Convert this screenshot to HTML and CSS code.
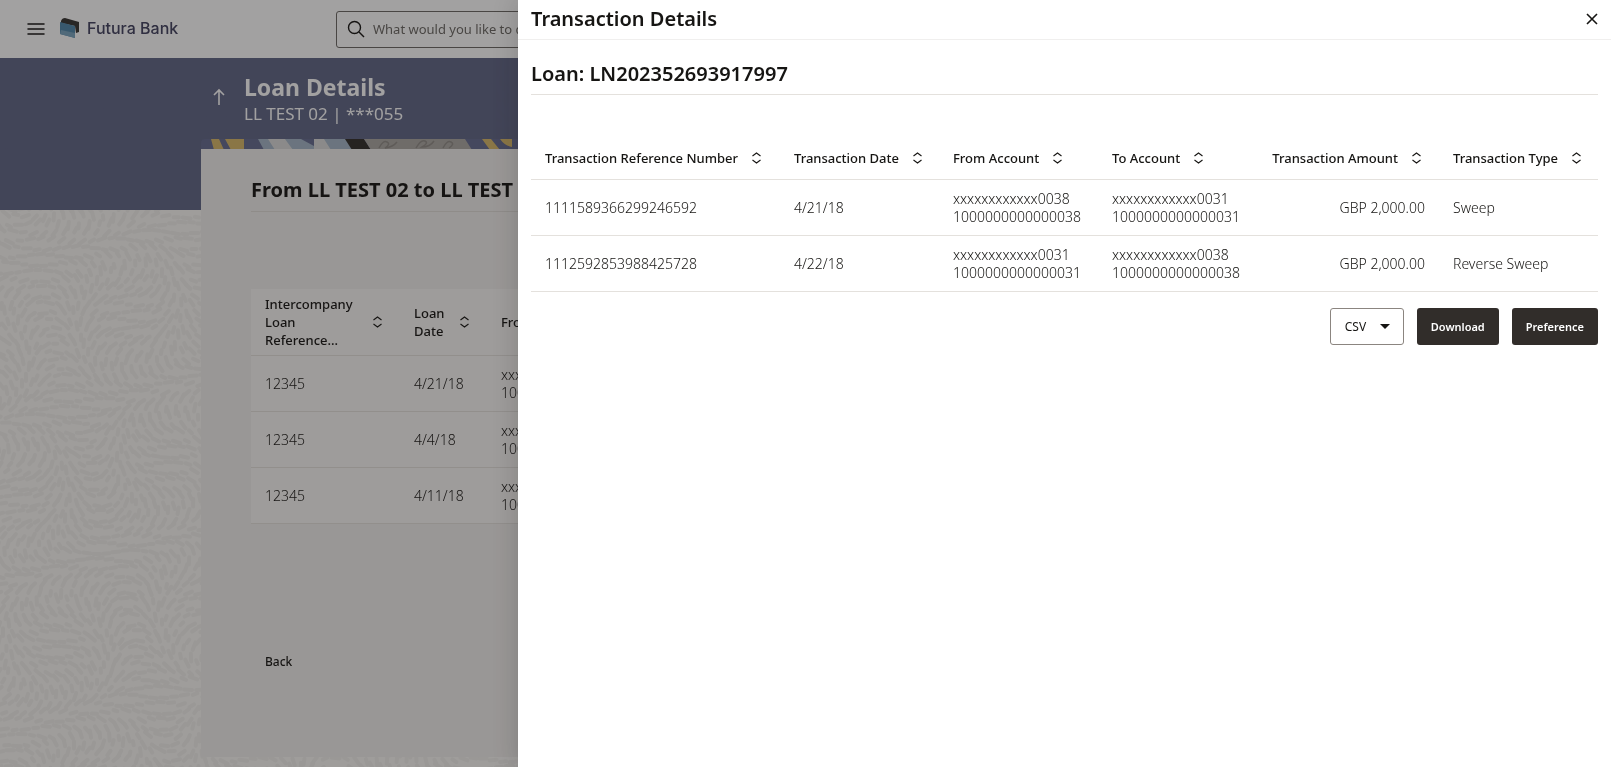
FILE: index.html
```
<!DOCTYPE html>
<html lang="en">
<head>
  <meta charset="UTF-8">
  <meta name="viewport" content="width=device-width, initial-scale=1.0">
  <title>Loan Details - Futura Bank</title>
  <link rel="stylesheet" href="styles.css">
</head>
<body>
  <!-- Sort icon shared by all table headers -->
  <svg class="sprite" aria-hidden="true">
    <symbol id="sort" viewBox="0 0 9 12">
      <path d="M0.5 4 L4.5 1 L8.5 4 M0.5 8 L4.5 11 L8.5 8" fill="none" stroke="currentColor" stroke-width="1.1"/>
    </symbol>
  </svg>

  <canvas class="texture"></canvas>

  <header class="topbar">
    <button class="icon-btn" type="button" aria-label="Menu">
      <svg width="18" height="14" viewBox="0 0 18 14"><path d="M1 2h16M1 7h16M1 12h16" stroke="#161513" stroke-width="1.5" stroke-linecap="round"/></svg>
    </button>
    <a class="brand" href="#">
      <svg width="20" height="20" viewBox="0 0 20 20">
        <path d="M1 3 Q2 0 5 0 L19 4 V14 L16 15 L15 8 L1 5z" fill="#35322f"/>
        <path d="M0 4 L15 8 V20 L0 16z" fill="#4f86a8"/>
        <path d="M1 12 L15 15 V20 L0 16z" fill="#79a3be"/>
      </svg>
      <span>Futura Bank</span>
    </a>
    <label class="search">
      <svg width="18" height="18" viewBox="0 0 18 18"><circle cx="7.5" cy="7.5" r="6" fill="none" stroke="#161513" stroke-width="1.4"/><path d="M12 12l5 5" stroke="#161513" stroke-width="1.4"/></svg>
      <input type="search" placeholder="What would you like to do today?" aria-label="Search">
    </label>
  </header>

  <main>
    <div class="banner">
      <a class="up" href="#" aria-label="Go back">
        <svg width="12" height="18" viewBox="0 0 12 18"><path d="M6 17V2M1 7l5-5 5 5" fill="none" stroke="#fff" stroke-width="1.6"/></svg>
      </a>
      <div>
        <h1>Loan Details</h1>
        <p>LL TEST 02 | ***055</p>
      </div>
    </div>

    <section class="card">
      <svg class="strip" viewBox="0 0 1209 10" preserveAspectRatio="xMinYMin slice">
        <rect width="1209" height="11" fill="#656b90"/>
        <path d="M10 0h8l5 11h-10z M24 0h19v11h-13z" fill="#d8b868"/>
        <path d="M57 0h90l10 11h-94z" fill="#a3b5c6"/>
        <path d="M67 0h17l8 11h-18z M113 0h10l7 11h-17z" fill="#d9d9d9"/>
        <path d="M100 0h13v7z" fill="#656b90"/>
        <path d="M144 0h19l7 11h-19z" fill="#312d2a"/>
        <path d="M163 0h101l7 11h-101z" fill="#aaa7a2"/>
        <path d="M178 9q4-8 8-6t-2 6q8-1 12-6M215 9q5-9 9-7t-3 6q8 0 12-6M242 9q4-8 8-6t-2 6" fill="none" stroke="#8f8b86" stroke-width="1.5"/>
        <path d="M281 0h9l9 11h-10z M299 0h12v8q-7-1-12-8z" fill="#d8b868"/>
        <path d="M330 0h40l10 11h-40z M520 0h60l10 11h-60z" fill="#a3b5c6"/>
      </svg>
      <div class="card-body">
        <h2>From LL TEST 02 to LL TEST 03</h2>
        <table class="grid loans">
          <thead>
            <tr>
              <th class="c-ref"><span><span>Intercompany Loan Reference...</span><svg><use href="#sort"/></svg></span></th>
              <th class="c-date"><span><span>Loan Date</span><svg><use href="#sort"/></svg></span></th>
              <th><span><span>From Account</span><svg><use href="#sort"/></svg></span></th>
            </tr>
          </thead>
          <tbody>
            <tr><td>12345</td><td>4/21/18</td><td>xxxxxxxxxxxx0038<br>1000000000000038</td></tr>
            <tr><td>12345</td><td>4/4/18</td><td>xxxxxxxxxxxx0038<br>1000000000000038</td></tr>
            <tr><td>12345</td><td>4/11/18</td><td>xxxxxxxxxxxx0038<br>1000000000000038</td></tr>
          </tbody>
        </table>
        <button class="back" type="button">Back</button>
      </div>
    </section>
  </main>

  <div class="overlay"></div>

  <aside class="drawer" role="dialog" aria-labelledby="drawer-title">
    <div class="drawer-head">
      <h2 id="drawer-title">Transaction Details</h2>
      <button class="icon-btn" type="button" aria-label="Close">
        <svg width="12" height="12" viewBox="0 0 12 12"><path d="M1 1l10 10M11 1L1 11" stroke="#161513" stroke-width="1.6"/></svg>
      </button>
    </div>
    <div class="drawer-body">
      <h3>Loan: LN202352693917997</h3>
      <table class="grid transactions">
        <colgroup>
          <col><col class="w-std"><col class="w-std"><col class="w-std"><col class="w-amount"><col class="w-std">
        </colgroup>
        <thead>
          <tr>
            <th><span><span>Transaction Reference Number</span><svg><use href="#sort"/></svg></span></th>
            <th><span><span>Transaction Date</span><svg><use href="#sort"/></svg></span></th>
            <th><span><span>From Account</span><svg><use href="#sort"/></svg></span></th>
            <th><span><span>To Account</span><svg><use href="#sort"/></svg></span></th>
            <th class="num"><span><span>Transaction Amount</span><svg><use href="#sort"/></svg></span></th>
            <th><span><span>Transaction Type</span><svg><use href="#sort"/></svg></span></th>
          </tr>
        </thead>
        <tbody>
          <tr>
            <td>1111589366299246592</td>
            <td>4/21/18</td>
            <td>xxxxxxxxxxxx0038<br>1000000000000038</td>
            <td>xxxxxxxxxxxx0031<br>1000000000000031</td>
            <td class="num">GBP 2,000.00</td>
            <td>Sweep</td>
          </tr>
          <tr>
            <td>1112592853988425728</td>
            <td>4/22/18</td>
            <td>xxxxxxxxxxxx0031<br>1000000000000031</td>
            <td>xxxxxxxxxxxx0038<br>1000000000000038</td>
            <td class="num">GBP 2,000.00</td>
            <td>Reverse Sweep</td>
          </tr>
        </tbody>
      </table>
      <div class="actions">
        <div class="select">
          <select aria-label="File format">
            <option>CSV</option>
            <option>PDF</option>
          </select>
        </div>
        <button class="btn" type="button">Download</button>
        <button class="btn" type="button">Preference</button>
      </div>
    </div>
  </aside>

  <script src="script.js"></script>
</body>
</html>
```
FILE: styles.css
```
* {
  box-sizing: border-box;
}

body {
  margin: 0;
  font-family: 'Noto Sans', 'Open Sans', sans-serif;
  font-size: 13px;
  line-height: 18px;
  color: #161513;
  background: #faf9f6;
  overflow: hidden;
}

h1, h2, h3, p {
  margin: 0;
}

button, input, select {
  font-family: inherit;
  color: inherit;
}

.sprite {
  position: absolute;
  width: 0;
  height: 0;
}

.texture {
  position: fixed;
  top: 0;
  left: 0;
  width: 100%;
  height: 100%;
  z-index: -1;
}

.icon-btn {
  display: flex;
  padding: 0;
  border: 0;
  background: none;
  cursor: pointer;
}

/* Top bar */
.topbar {
  display: flex;
  align-items: center;
  height: 58px;
  padding-left: 27px;
  background: #fff;
}

.brand {
  display: flex;
  align-items: center;
  gap: 7px;
  width: 276px;
  margin-left: 15px;
  padding-bottom: 3px;
  font-family: Inter, sans-serif;
  font-size: 16px;
  font-weight: 500;
  color: #41415f;
  text-decoration: none;
}

.search {
  display: flex;
  align-items: center;
  gap: 8px;
  width: 58%;
  height: 37px;
  padding-left: 10px;
  border: 1px solid #6b6864;
  border-radius: 3px;
}

.search input {
  flex: 1;
  padding: 0;
  border: 0;
  outline: 0;
  background: none;
  font-size: 13px;
}

.search input::placeholder {
  color: #6b6864;
}

/* Page banner */
.banner {
  display: flex;
  gap: 19px;
  height: 152px;
  padding: 16px 0 0 213px;
  background: rgba(86, 92, 126, 0.94);
  color: #fff;
}

.up {
  padding-top: 14px;
}

.banner h1 {
  font-size: 23px;
  line-height: 26px;
  font-weight: 700;
}

.banner p {
  font-size: 17px;
  line-height: 27px;
}

/* Card */
.card {
  margin: -71px 201px 0;
}

.strip {
  display: block;
  width: 100%;
  height: 10px;
  border-radius: 4px 4px 0 0;
}

.card-body {
  padding: 26px 50px 85px;
  background: #f1efed;
}

.card h2 {
  padding-bottom: 6px;
  border-bottom: 1px solid #dfdcd8;
  font-size: 20px;
  line-height: 30px;
  font-weight: 700;
}

/* Tables */
.grid {
  width: 100%;
  table-layout: fixed;
  border-spacing: 0;
  background: #f9f7f5;
}

.grid th,
.grid td {
  padding: 0 14px;
  border-bottom: 1px solid #e4e1dd;
  text-align: left;
}

.grid th {
  font-weight: 500;
}

.grid td {
  height: 56px;
  font-size: 14px;
  font-weight: 300;
}

.grid th > span {
  display: inline-flex;
  align-items: center;
  gap: 14px;
}

.grid th svg {
  flex: none;
  width: 9px;
  height: 12px;
  margin-right: 4px;
}

.grid .num {
  text-align: right;
}

.loans {
  margin-top: 77px;
}

.loans th {
  height: 67px;
}

.loans th > span {
  display: flex;
  justify-content: space-between;
}

.loans .c-ref {
  width: 149px;
}

.loans .c-date {
  width: 87px;
}

.back {
  margin: 128px 0 0 14px;
  padding: 0;
  border: 0;
  background: none;
  font-size: 12px;
  line-height: 20px;
  font-weight: 500;
}

.overlay {
  position: fixed;
  inset: 0;
  background: rgba(22, 21, 19, 0.4);
}

/* Drawer */
.drawer {
  position: fixed;
  top: 0;
  right: 0;
  bottom: 0;
  width: calc(100% - 518px);
  background: #fff;
  box-shadow: 0 0 24px rgba(22, 21, 19, 0.2);
}

.drawer-head {
  display: flex;
  justify-content: space-between;
  align-items: center;
  height: 40px;
  padding: 0 13px 2px;
  border-bottom: 1px solid #f0efee;
}

.drawer-head h2 {
  font-size: 20px;
  line-height: 28px;
  font-weight: 600;
}

.drawer-body {
  padding: 19px 13px;
}

.drawer-body h3 {
  padding-bottom: 6px;
  border-bottom: 1px solid #e4e1dd;
  font-size: 20px;
  line-height: 29px;
  font-weight: 600;
}

.transactions {
  margin-top: 41px;
  background: none;
}

.transactions th {
  height: 44px;
  white-space: nowrap;
}

.w-std {
  width: 159px;
}

.w-amount {
  width: 182px;
}

.actions {
  display: flex;
  justify-content: flex-end;
  gap: 13px;
  margin-top: 16px;
}

.select {
  position: relative;
}

.select::after {
  content: '';
  position: absolute;
  top: 16px;
  right: 14px;
  border: 5px solid transparent;
  border-top-color: #161513;
  border-bottom: 0;
  pointer-events: none;
}

.select select {
  appearance: none;
  width: 74px;
  height: 37px;
  padding: 0 14px;
  border: 1px solid #8b8580;
  border-radius: 3px;
  background: #fff;
  font-size: 12px;
}

.btn {
  height: 37px;
  padding: 0 14px;
  border: 0;
  border-radius: 3px;
  background: #312d2a;
  color: #fff;
  font-size: 11px;
  font-weight: 600;
}
```
FILE: script.js
```
const canvas = document.querySelector('.texture');
const ctx = canvas.getContext('2d');

// Short dashes that follow a slowly turning field
function drawTexture() {
  canvas.width = window.innerWidth;
  canvas.height = window.innerHeight;
  ctx.strokeStyle = '#f2f0ed';
  ctx.lineWidth = 4;
  ctx.lineCap = 'round';

  let row = 0;
  for (let y = 0; y < canvas.height + 8; y += 8) {
    for (let x = (row % 2) * 5; x < canvas.width + 10; x += 10) {
      const angle = 1.6 * Math.sin(x / 41 + y / 67) + 1.5 * Math.cos(y / 39 - x / 71);
      const size = 2 + Math.abs(Math.sin(x * 3 + y * 5)) * 2;
      const cx = x + Math.sin(x * 5 + y * 3) * 2;
      const cy = y + Math.sin(x * 7 + y * 11) * 2;
      const dx = Math.cos(angle) * size;
      const dy = Math.sin(angle) * size;
      ctx.beginPath();
      ctx.moveTo(cx - dx, cy - dy);
      ctx.lineTo(cx + dx, cy + dy);
      ctx.stroke();
    }
    row++;
  }
}

drawTexture();
window.addEventListener('resize', drawTexture);
```
